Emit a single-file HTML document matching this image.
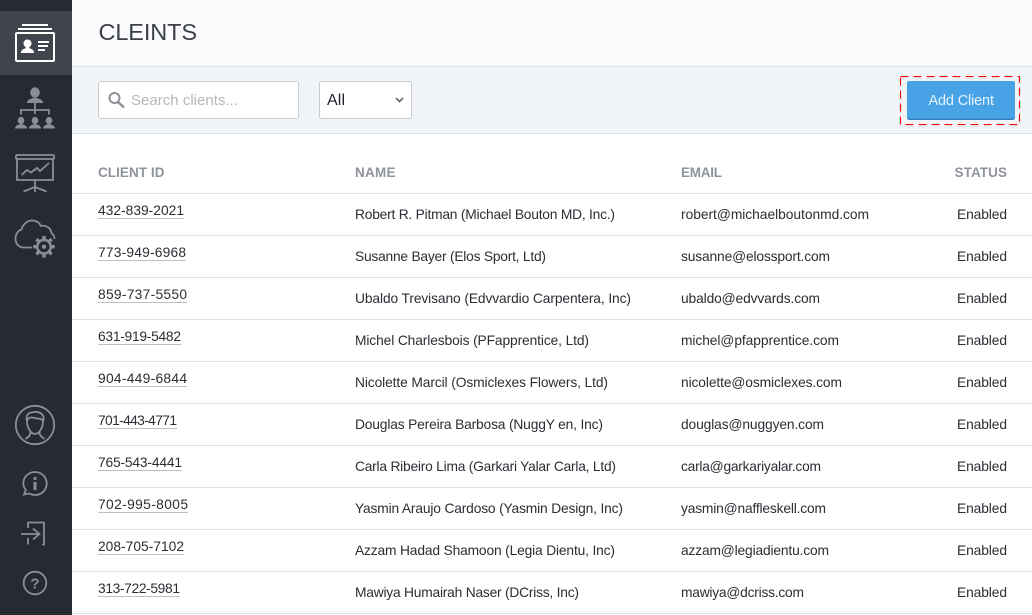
<!DOCTYPE html>
<html><head><meta charset="utf-8"><style>
html,body{margin:0;padding:0;width:1032px;height:615px;overflow:hidden;background:#fff}
svg{display:block;position:absolute;left:0;top:0}
text{font-family:"Liberation Sans",sans-serif}
.c{font-size:13.8px;fill:#2b2e34}
.h{font-size:13.5px;fill:#8f949b;font-weight:bold}
.i{fill:none;stroke:#8a8f96;stroke-width:1.8}
.f{fill:#8a8f96}
</style></head><body>
<svg width="1032" height="615" viewBox="0 0 1032 615" xmlns="http://www.w3.org/2000/svg">
<rect x="72" y="0" width="960" height="66" fill="#fafbfd"/>
<rect x="72" y="66" width="960" height="68" fill="#f2f5f8"/>
<rect x="72" y="66" width="960" height="1" fill="#dfe3e8"/>
<rect x="72" y="133" width="960" height="1" fill="#dfe3e8"/>
<rect x="0" y="0" width="72" height="615" fill="#262a33"/>
<rect x="0" y="11" width="72" height="64" fill="#3f444d"/>

<text x="98.500" y="40" font-size="23.500" fill="#3c3f46" textLength="98.500">CLEINTS</text>

<rect x="98.500" y="81.500" width="200" height="37" rx="2.500" fill="#fff" stroke="#c6cacf"/>
<circle cx="114.500" cy="98" r="5" fill="none" stroke="#8f9399" stroke-width="2"/>
<path d="M118 102L124 107.500" stroke="#8f9399" stroke-width="2.400" fill="none"/>
<text x="131" y="105" font-size="15" fill="#b4b7bc" textLength="107">Search clients...</text>

<rect x="319.500" y="81.500" width="92" height="37" rx="2.500" fill="#fff" stroke="#c6cacf"/>
<text x="327" y="105" font-size="16" fill="#1f2228" textLength="18">All</text>
<path d="M396 98l3.500 3.500 3.500-3.500" fill="none" stroke="#6b7078" stroke-width="1.800"/>

<rect x="900.500" y="78" width="119" height="48" fill="none" stroke="#000" stroke-opacity=".06" stroke-width="3" stroke-dasharray="8 5"/>
<rect x="907" y="81" width="108" height="39" rx="2.500" fill="#2f7fbd"/>
<rect x="907" y="81" width="108" height="37.500" rx="2.500" fill="#47a3e6"/>
<text x="928.500" y="105" font-size="14.500" fill="#e6f3fc" textLength="65.500">Add Client</text>
<rect x="900.500" y="76.500" width="119" height="48" fill="none" stroke="#f00" stroke-width="1" stroke-dasharray="8 5"/>

<text class="h" x="98" y="177" textLength="66.500">CLIENT ID</text>
<text class="h" x="355" y="177" textLength="40.500">NAME</text>
<text class="h" x="681" y="177" textLength="41">EMAIL</text>
<text class="h" x="954.500" y="177" textLength="52.500">STATUS</text>

<g fill="#e0e3e6">
<rect x="72" y="193" width="960" height="1"/><rect x="72" y="235" width="960" height="1"/><rect x="72" y="277" width="960" height="1"/><rect x="72" y="319" width="960" height="1"/><rect x="72" y="361" width="960" height="1"/><rect x="72" y="403" width="960" height="1"/><rect x="72" y="445" width="960" height="1"/><rect x="72" y="487" width="960" height="1"/><rect x="72" y="529" width="960" height="1"/><rect x="72" y="571" width="960" height="1"/><rect x="72" y="613" width="960" height="1"/>
</g>
<g fill="#bcc0c6">
<rect x="98" y="218" width="86" height="1"/><rect x="98" y="260" width="88" height="1"/><rect x="98" y="302" width="89" height="1"/><rect x="98" y="344" width="83" height="1"/><rect x="98" y="386" width="89" height="1"/><rect x="98" y="428" width="79" height="1"/><rect x="98" y="470" width="84" height="1"/><rect x="98" y="512" width="90" height="1"/><rect x="98" y="554" width="86" height="1"/><rect x="98" y="596" width="82" height="1"/>
</g>

<g class="c">
<text x="98" y="215" textLength="86">432-839-2021</text>
<text x="98" y="257" textLength="88">773-949-6968</text>
<text x="98" y="299" textLength="89">859-737-5550</text>
<text x="98" y="341" textLength="83">631-919-5482</text>
<text x="98" y="383" textLength="89">904-449-6844</text>
<text x="98" y="425" textLength="79">701-443-4771</text>
<text x="98" y="467" textLength="84">765-543-4441</text>
<text x="98" y="509" textLength="90">702-995-8005</text>
<text x="98" y="551" textLength="86">208-705-7102</text>
<text x="98" y="593" textLength="82">313-722-5981</text>

<text x="355" y="219" textLength="260">Robert R. Pitman (Michael Bouton MD, Inc.)</text>
<text x="355" y="261" textLength="191">Susanne Bayer (Elos Sport, Ltd)</text>
<text x="355" y="303" textLength="276">Ubaldo Trevisano (Edvvardio Carpentera, Inc)</text>
<text x="355" y="345" textLength="234">Michel Charlesbois (PFapprentice, Ltd)</text>
<text x="355" y="387" textLength="253">Nicolette Marcil (Osmiclexes Flowers, Ltd)</text>
<text x="355" y="429" textLength="248">Douglas Pereira Barbosa (NuggY en, Inc)</text>
<text x="355" y="471" textLength="261">Carla Ribeiro Lima (Garkari Yalar Carla, Ltd)</text>
<text x="355" y="513" textLength="268">Yasmin Araujo Cardoso (Yasmin Design, Inc)</text>
<text x="355" y="555" textLength="260">Azzam Hadad Shamoon (Legia Dientu, Inc)</text>
<text x="355" y="597" textLength="224">Mawiya Humairah Naser (DCriss, Inc)</text>

<text x="681" y="219" textLength="188">robert@michaelboutonmd.com</text>
<text x="681" y="261" textLength="149">susanne@elossport.com</text>
<text x="681" y="303" textLength="139">ubaldo@edvvards.com</text>
<text x="681" y="345" textLength="158">michel@pfapprentice.com</text>
<text x="681" y="387" textLength="161">nicolette@osmiclexes.com</text>
<text x="681" y="429" textLength="143">douglas@nuggyen.com</text>
<text x="681" y="471" textLength="140">carla@garkariyalar.com</text>
<text x="681" y="513" textLength="145">yasmin@naffleskell.com</text>
<text x="681" y="555" textLength="148">azzam@legiadientu.com</text>
<text x="681" y="597" textLength="123">mawiya@dcriss.com</text>

<text x="957" y="219" textLength="50">Enabled</text>
<text x="957" y="261" textLength="50">Enabled</text>
<text x="957" y="303" textLength="50">Enabled</text>
<text x="957" y="345" textLength="50">Enabled</text>
<text x="957" y="387" textLength="50">Enabled</text>
<text x="957" y="429" textLength="50">Enabled</text>
<text x="957" y="471" textLength="50">Enabled</text>
<text x="957" y="513" textLength="50">Enabled</text>
<text x="957" y="555" textLength="50">Enabled</text>
<text x="957" y="597" textLength="50">Enabled</text>
</g>

<!-- client card -->
<g fill="none" stroke="#fff">
<rect x="16" y="33" width="38" height="28" rx="1" stroke-width="2"/>
<path d="M22 25H48M18 29H52" stroke-width="2"/>
<path d="M38 42H49M38 46H48M38 50H45" stroke-width="2"/>
</g>
<circle cx="27.500" cy="43.500" r="4" fill="#fff"/>
<path d="M21 53c0-3.500 2.500-3.800 4.500-4.800l.5-2h3l.5 2c2 1 4.500 1.300 4.500 4.800z" fill="#fff"/>

<!-- org chart -->
<g class="f">
<ellipse cx="35" cy="92.500" rx="4.800" ry="5.200"/>
<path d="M27 103c0-3.500 3.500-3.800 6-5h4c2.500 1.200 6 1.500 6 5z"/>
<ellipse cx="21" cy="120.500" rx="3.300" ry="3.600"/><path d="M15 128.500c0-3 3-3.400 4.500-4.400h3c1.500 1 4.500 1.400 4.500 4.400z"/>
<ellipse cx="35" cy="120.500" rx="3.300" ry="3.600"/><path d="M29 128.500c0-3 3-3.400 4.500-4.400h3c1.500 1 4.500 1.400 4.500 4.400z"/>
<ellipse cx="49" cy="120.500" rx="3.300" ry="3.600"/><path d="M43 128.500c0-3 3-3.400 4.500-4.400h3c1.500 1 4.500 1.400 4.500 4.400z"/>
</g>
<path class="i" d="M35 103V114M21 114.500V110H49V114.500"/>

<!-- presentation -->
<rect class="i" x="16" y="155" width="38" height="4" rx="1"/>
<path class="i" d="M17 159V180H53V159M35 180V192M23.500 191.500L35 187L46.500 191.500"/>
<path class="i" d="M21.500 175L27 170L31 172.500L37 168L40 171L49 163"/>

<!-- cloud gear -->
<path class="i" d="M32 247.500H24C18 247.500 15.500 243 15.500 238.500C15.500 233.500 18.500 230.500 21.500 229.500C23 224 27.500 220.500 32 220.500C36.500 220.500 39.500 223 41 226C46 224.500 51 228.500 51.500 233C53.500 234.500 54.500 236 54.500 239"/>
<circle cx="44" cy="246.700" r="6.800" fill="none" stroke="#8a8f96" stroke-width="2.600"/>
<circle cx="44" cy="246.700" r="2.200" class="f"/>
<path d="M44 236V239M44 254.500V257.500M33.200 246.700H36.200M51.800 246.700H54.800M36.400 239.100L38.500 241.200M49.500 252.200L51.600 254.300M51.600 239.100L49.500 241.200M38.500 252.200L36.400 254.300" stroke="#8a8f96" stroke-width="3.400" fill="none"/>

<!-- avatar -->
<circle class="i" cx="35" cy="425" r="19.200"/>
<path class="i" d="M27 421C25.500 416 28 412.500 32 412.500C34 411.500 38 411.500 40 413C43 414 44.500 417 43 421.500C43 427 39.500 434 35 434C30.500 434 27 427 27 421Z"/>
<path class="i" d="M27 421C28 418.500 29 417.500 31 417.500C34 417.500 38 419.500 40 418.500C41 419 42.500 419.500 43 421.500M30.500 432C30.500 436 28 437 25.500 439M39.500 432C39.500 436 42 437 44.500 439"/>

<!-- info bubble -->
<path class="i" d="M24 494.500L25.800 490C24 487.500 23.300 485.500 23.300 483.500C23.300 477 28.500 472 35 472C41.500 472 46.700 477 46.700 483.500C46.700 490 41.500 495 35 495C32.500 495 30.500 494 29 493.500Z"/>
<circle cx="35" cy="478.500" r="1.600" class="f"/>
<rect x="33.500" y="482" width="3" height="8" class="f"/>

<!-- sign in -->
<path class="i" d="M28 528V522.500H44V544.500H42M28 538V544.500"/>
<path class="i" d="M21 534H39.500M33 528.500L39.500 534L33 539.500"/>

<!-- help -->
<circle class="i" cx="35" cy="583" r="11.300"/>
<text x="35" y="588.500" font-size="15" font-weight="bold" fill="#8a8f96" text-anchor="middle">?</text>
</svg>
</body></html>
